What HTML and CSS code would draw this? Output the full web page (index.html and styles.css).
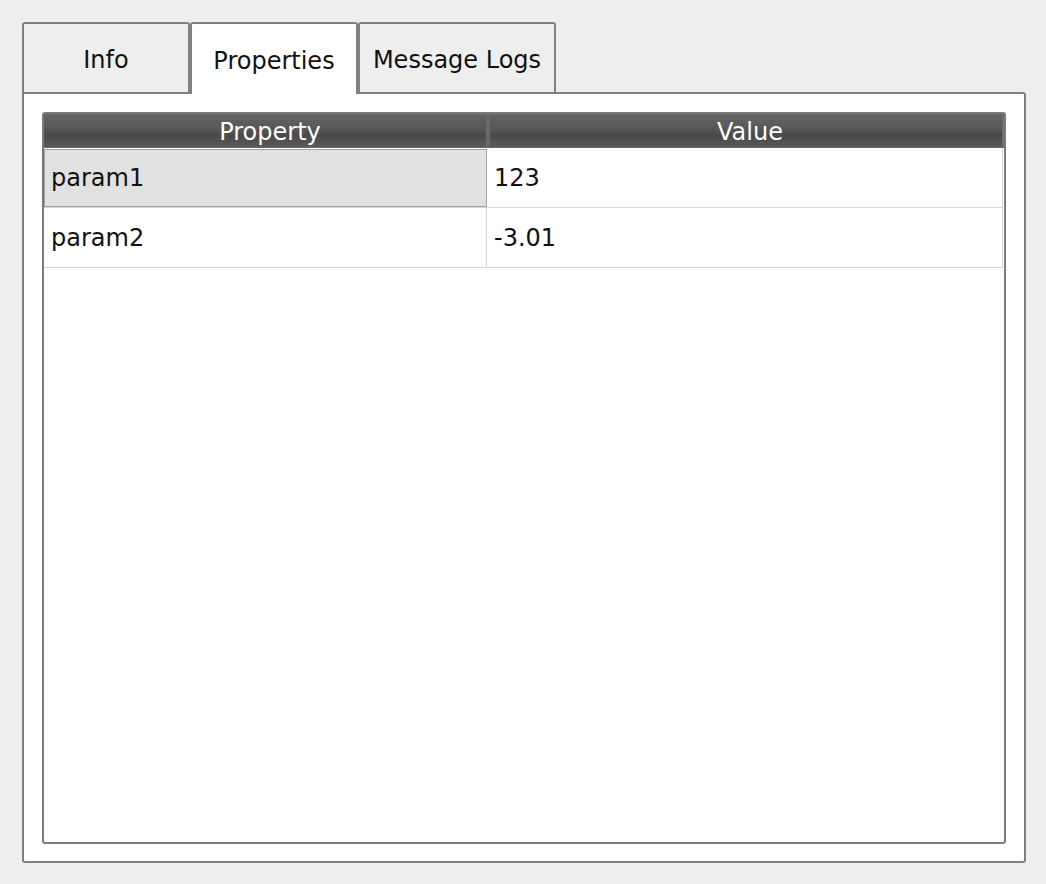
FILE: index.html
```html
<!DOCTYPE html>
<html>
<head>
<meta charset="utf-8">
<link rel="stylesheet" href="styles.css">
</head>
<body>
<div class="window">
  <div class="tabs">
    <div class="tab tab-info">Info</div>
    <div class="tab tab-props active">Properties</div>
    <div class="tab tab-logs">Message Logs</div>
  </div>
  <div class="panel">
    <div class="table">
      <div class="header">
        <div class="hcell hprop">Property</div>
        <div class="hdiv"></div>
        <div class="hcell hval">Value</div>
      </div>
      <div class="rows">
        <div class="row">
          <div class="cell key selected">param1</div>
          <div class="cell val">123</div>
        </div>
        <div class="row">
          <div class="cell key">param2</div>
          <div class="cell val">-3.01</div>
        </div>
      </div>
    </div>
  </div>
</div>
</body>
</html>
```
FILE: styles.css
```css
html, body {
  margin: 0;
  padding: 0;
  background: #eeeeee;
}
body {
  font-family: "DejaVu Sans", "Liberation Sans", sans-serif;
  font-size: 24px;
  color: #111;
}
.window {
  padding: 22px 20px 21px 22px;
}
.tabs {
  display: flex;
  align-items: flex-start;
  height: 70px;
}
.tab {
  box-sizing: border-box;
  height: 70px;
  border: 2px solid #808080;
  border-bottom: none;
  border-radius: 3px 3px 0 0;
  background: #eeeeee;
  display: flex;
  align-items: center;
  justify-content: center;
  padding-top: 4px;
}
.tab-info { width: 168px; }
.tab-props { width: 168px; }
.tab-logs { width: 198px; }
.tab.active {
  background: #ffffff;
  height: 72px;
  position: relative;
  z-index: 2;
  padding-top: 4px;
}
.panel {
  box-sizing: border-box;
  width: 1004px;
  height: 771px;
  border: 2px solid #808080;
  border-radius: 0 3px 3px 3px;
  background: #ffffff;
  padding: 18px 18px 17px 18px;
}
.table {
  box-sizing: border-box;
  height: 100%;
  border: 2px solid #7a7a7a;
  border-radius: 3px;
  background: #ffffff;
  display: flex;
  flex-direction: column;
}
.header {
  display: grid;
  grid-template-columns: 442px 4px 1fr;
  height: 33px;
  background: linear-gradient(to bottom, #646464 0%, #595959 40%, #4a4a4a 65%, #5a5a5a 100%);
  border-bottom: 1px solid #6a6a6a;
  box-shadow: inset -2px 0 0 #6e6e6e;
  color: #ffffff;
}
.hcell {
  display: flex;
  align-items: center;
  justify-content: center;
  line-height: 1;
  padding-top: 3px;
}
.hprop { padding-left: 10px; }
.hval { padding-left: 6px; }
.hdiv {
  background: #6a6a6a;
}
.rows {
  margin-right: 1px;
}
.row {
  display: grid;
  grid-template-columns: 443px 1fr;
  height: 60px;
  box-sizing: border-box;
  border-bottom: 1px solid #d6d6d6;
  border-right: 1px solid #d6d6d6;
}
.cell {
  display: flex;
  align-items: center;
  box-sizing: border-box;
}
.key {
  padding-left: 7px;
  border-right: 1px solid #d6d6d6;
}
.val {
  padding-left: 7px;
}
.key.selected {
  background: #e1e1e1;
  border: 1px solid #a2a2a2;
  margin: 1px 0 0 0;
  padding-left: 6px;
}
```
